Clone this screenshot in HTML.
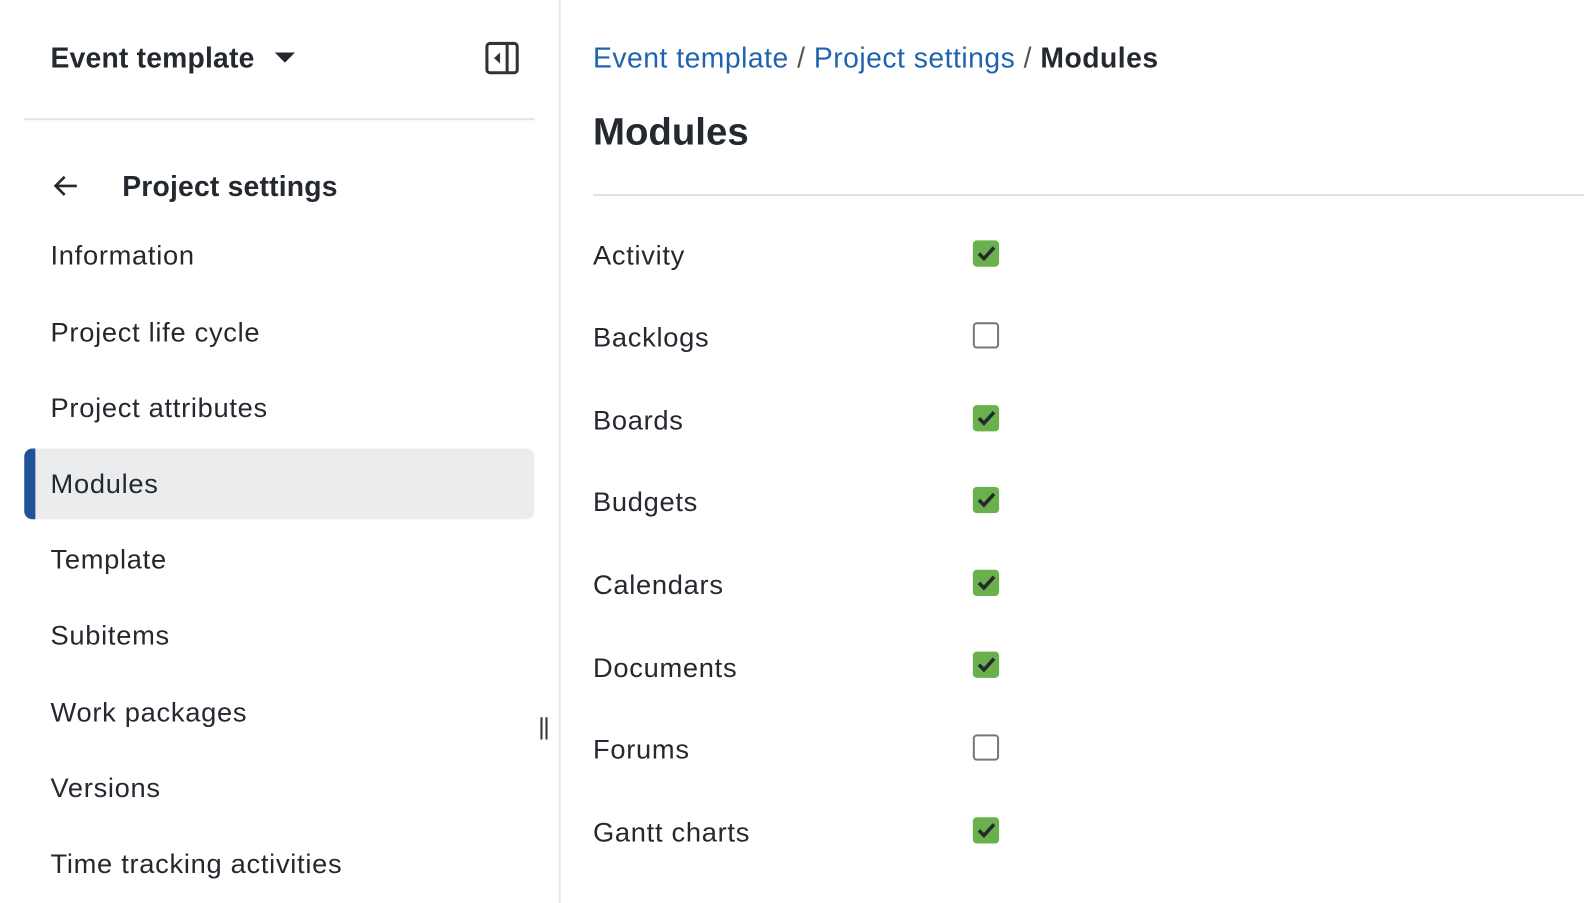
<!DOCTYPE html><html><head><style>
html,body{margin:0;width:1584px;height:894px;overflow:hidden;background:#fff}
#w{position:absolute;left:0;top:0;width:1568px;height:885px;transform:scale(1.0102);transform-origin:0 0;font-family:"Liberation Sans",Arial,sans-serif;color:#24292f}
.a{position:absolute;white-space:nowrap}
.side{position:absolute;left:0;top:0;width:553px;height:894px;border-right:2px solid #e8e8e8}
.item{position:absolute;left:50px;font-size:27px;letter-spacing:0.7px;white-space:nowrap}
.cb{position:absolute;left:963px;width:26px;height:26px;border-radius:4px;box-sizing:border-box}
.on{background:#6ab04c}
.off{border:2px solid #777;background:#fff}
.lbl{position:absolute;left:587px;font-size:27px;letter-spacing:0.7px}
</style></head><body><div id="w">
<div class="side"></div>
<div class="a" style="left:50px;top:42px;font-size:28px;font-weight:bold;letter-spacing:0.2px">Event template</div>
<svg class="a" style="left:270px;top:50px" width="24" height="14"><path d="M2 2h20L12 12z" fill="#24292f"/></svg>
<svg class="a" style="left:480px;top:41px" width="34" height="33"><rect x="2" y="2" width="30" height="29" rx="3" fill="none" stroke="#333" stroke-width="3"/><line x1="22" y1="2" x2="22" y2="31" stroke="#333" stroke-width="3"/><path d="M15 11v11l-6-5.5z" fill="#333"/></svg>
<div class="a" style="left:24px;top:117px;width:505px;height:2px;background:#e2e2e2"></div>
<svg class="a" style="left:52px;top:172px" width="26" height="24"><path d="M24 12H4M12 3l-9 9 9 9" fill="none" stroke="#24292f" stroke-width="2.6"/></svg>
<div class="a" style="left:121px;top:169px;font-size:28px;font-weight:bold;letter-spacing:0.2px">Project settings</div>
<div class="a" style="left:24px;top:444px;width:505px;height:70px;background:#ebecee;border-radius:8px"></div>
<div class="a" style="left:24px;top:444px;width:11px;height:70px;background:#1f5296;border-radius:8px 0 0 8px"></div>
<div class="item" style="top:238px">Information</div>
<div class="item" style="top:314px">Project life cycle</div>
<div class="item" style="top:389px">Project attributes</div>
<div class="item" style="top:464px">Modules</div>
<div class="item" style="top:539px">Template</div>
<div class="item" style="top:614px">Subitems</div>
<div class="item" style="top:690px">Work packages</div>
<div class="item" style="top:765px">Versions</div>
<div class="item" style="top:840px">Time tracking activities</div>
<div class="a" style="left:535px;top:710px;width:2px;height:22px;background:#333"></div>
<div class="a" style="left:540px;top:710px;width:2px;height:22px;background:#333"></div>
<div class="a" style="left:587px;top:42px;font-size:28px;letter-spacing:0.5px"><span style="color:#1f63b0">Event template</span> <span style="color:#555">/</span> <span style="color:#1f63b0">Project settings</span> <span style="color:#555">/</span> <b>Modules</b></div>
<div class="a" style="left:587px;top:110px;font-size:38px;font-weight:bold">Modules</div>
<div class="a" style="left:587px;top:192px;width:997px;height:2px;background:#e2e2e2"></div>
<div class="lbl" style="top:238px">Activity</div>
<div class="lbl" style="top:319px">Backlogs</div>
<div class="lbl" style="top:401px">Boards</div>
<div class="lbl" style="top:482px">Budgets</div>
<div class="lbl" style="top:564px">Calendars</div>
<div class="lbl" style="top:646px">Documents</div>
<div class="lbl" style="top:727px">Forums</div>
<div class="lbl" style="top:809px">Gantt charts</div>
<svg width="0" height="0" style="position:absolute"><defs><path id="ck" d="M6 13l5 5 10-11" fill="none" stroke="#24292f" stroke-width="3.5"/></defs></svg>
<div class="cb on" style="top:238px"><svg width="26" height="26"><use href="#ck"/></svg></div>
<div class="cb off" style="top:319px"></div>
<div class="cb on" style="top:401px"><svg width="26" height="26"><use href="#ck"/></svg></div>
<div class="cb on" style="top:482px"><svg width="26" height="26"><use href="#ck"/></svg></div>
<div class="cb on" style="top:564px"><svg width="26" height="26"><use href="#ck"/></svg></div>
<div class="cb on" style="top:645px"><svg width="26" height="26"><use href="#ck"/></svg></div>
<div class="cb off" style="top:727px"></div>
<div class="cb on" style="top:809px"><svg width="26" height="26"><use href="#ck"/></svg></div>
</div></body></html>
